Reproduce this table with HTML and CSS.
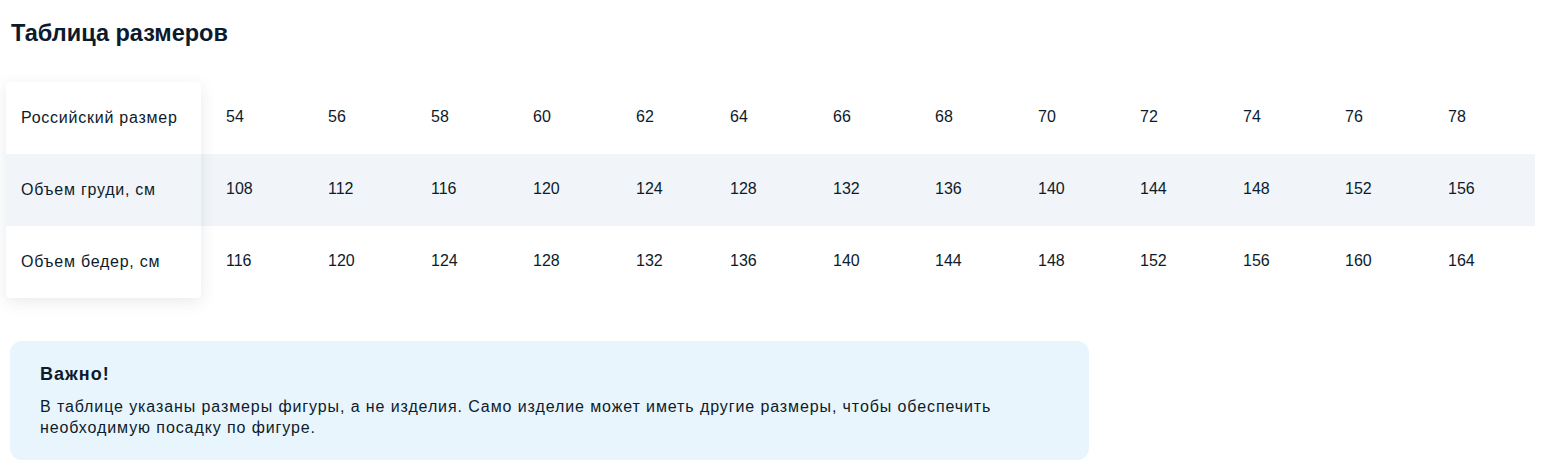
FILE: index.html
```html
<!DOCTYPE html>
<html lang="ru">
<head>
<meta charset="utf-8">
<title>Таблица размеров</title>
<link rel="stylesheet" href="styles.css">
</head>
<body>
<section class="sizes">
  <h2 class="title">Таблица размеров</h2>
  <div class="table">
    <div class="labels">
      <div class="label">Российский размер</div>
      <div class="label label-striped">Объем груди, см</div>
      <div class="label">Объем бедер, см</div>
    </div>
    <div class="values">
      <div class="row">
        <span>54</span><span>56</span><span>58</span><span>60</span><span>62</span><span>64</span><span>66</span><span>68</span><span>70</span><span>72</span><span>74</span><span>76</span><span>78</span>
      </div>
      <div class="row row-striped">
        <span>108</span><span>112</span><span>116</span><span>120</span><span>124</span><span>128</span><span>132</span><span>136</span><span>140</span><span>144</span><span>148</span><span>152</span><span>156</span>
      </div>
      <div class="row">
        <span>116</span><span>120</span><span>124</span><span>128</span><span>132</span><span>136</span><span>140</span><span>144</span><span>148</span><span>152</span><span>156</span><span>160</span><span>164</span>
      </div>
    </div>
  </div>
  <div class="note">
    <div class="note-title">Важно!</div>
    <p class="note-text">В таблице указаны размеры фигуры, а не изделия. Само изделие может иметь другие размеры, чтобы обеспечить<br>необходимую посадку по фигуре.</p>
  </div>
</section>
</body>
</html>
```

FILE: styles.css
```css
* { box-sizing: border-box; }
html, body { margin: 0; padding: 0; background: #fff; }
body {
  font-family: "Liberation Sans", Arial, sans-serif;
  color: #0d1b2c;
}
.title {
  margin: 0;
  padding: 18px 0 0 11px;
  font-size: 23.5px;
  line-height: 30px;
  font-weight: 700;
  color: #0b1a2d;
}
.table {
  display: flex;
  margin: 34px 0 0 6px;
  width: 1529px;
}
.labels {
  position: relative;
  z-index: 1;
  width: 195px;
  flex: none;
  background: #fff;
  border-radius: 4px;
  box-shadow: 0 4px 16px rgba(30, 50, 80, 0.10);
}
.label {
  height: 72px;
  display: flex;
  align-items: center;
  padding: 0 0 1px 15px;
  font-size: 16px;
  letter-spacing: 0.75px;
}
.label-striped { background: #f1f5f9; }
.values { flex: 1; }
.row {
  height: 72px;
  display: grid;
  grid-template-columns: 117px 103px 102px 103px 94px 103px 102px 103px 102px 103px 102px 103px 97px;
  align-items: center;
  font-size: 16px;
}
.row span { padding: 0 0 3px 10px; }
.row span:first-child { padding-left: 25px; }
.row-striped { background: #f1f5f9; }
.note {
  margin: 43px 0 0 10px;
  width: 1079px;
  height: 119px;
  border-radius: 12px;
  background: #e8f5fd;
  padding: 22px 30px 0 30px;
}
.note-title {
  font-size: 18px;
  font-weight: 700;
  line-height: 22px;
  letter-spacing: 1px;
}
.note-text {
  margin: 11px 0 0;
  font-size: 16px;
  line-height: 21px;
  letter-spacing: 0.9px;
}
```
